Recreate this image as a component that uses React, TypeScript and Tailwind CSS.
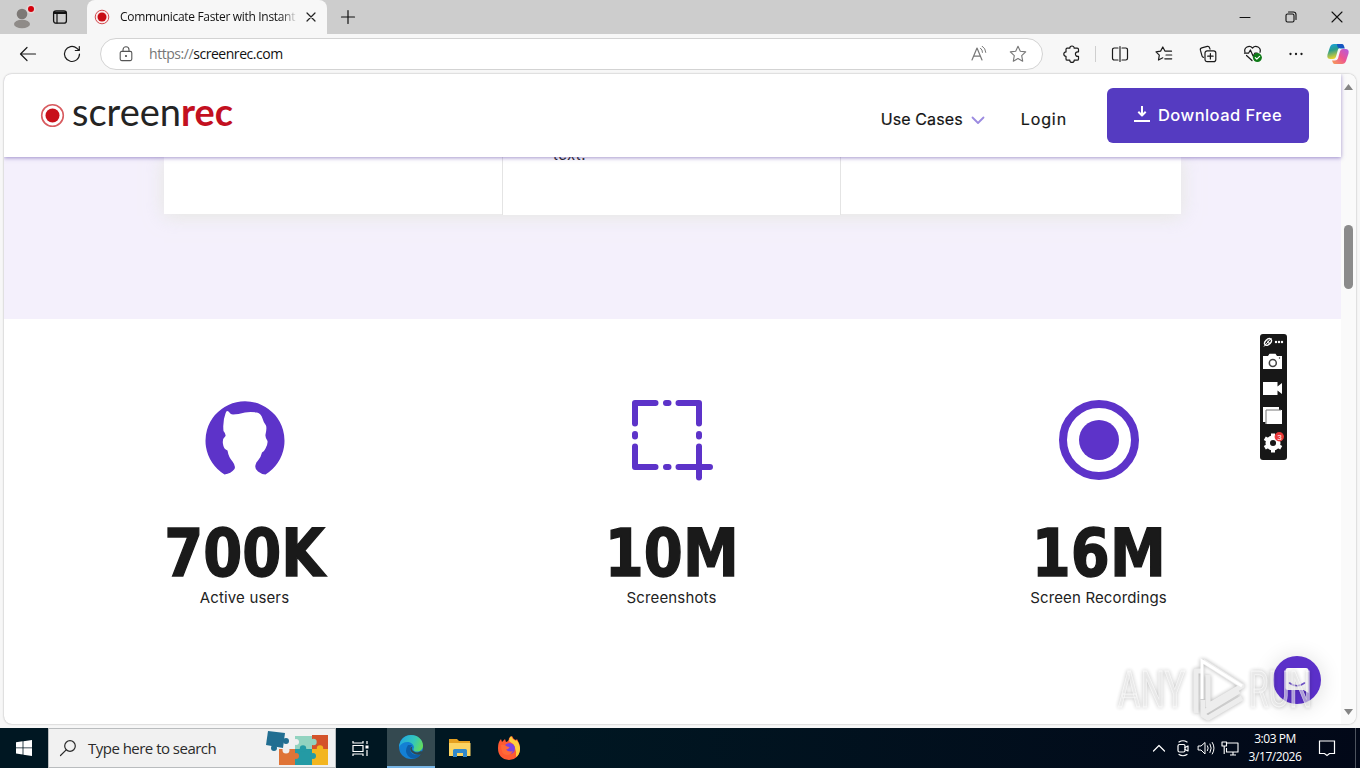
import type { ReactNode } from "react"

interface IconProps {
  readonly size?: number
  readonly className?: string
  readonly children: ReactNode
}

function Icon({ size = 20, className = "", children }: IconProps) {
  return (
    <svg
      width={size}
      height={size}
      viewBox={`0 0 ${size} ${size}`}
      fill="none"
      stroke="currentColor"
      strokeWidth="1.2"
      strokeLinecap="round"
      strokeLinejoin="round"
      className={`block shrink-0 ${className}`}
    >
      {children}
    </svg>
  )
}

const STAR = "M10 2.2l2.3 5 5.4.7-4 3.8 1 5.5-4.7-2.7-4.7 2.7 1-5.5-4-3.8 5.4-.7z"

function TitleBar() {
  return (
    <div className="flex h-[34px] bg-[#cdcdcd]">
      <div className="flex w-[87px] items-center">
        <svg width="26" height="28" viewBox="0 0 26 28" className="ml-[10px]">
          <circle cx="12" cy="11" r="5.3" fill="#7d7976" />
          <ellipse cx="12" cy="21" rx="8" ry="4.3" fill="#8f8b88" />
          <circle cx="21" cy="6" r="4.6" fill="#e3d6d6" />
          <circle cx="21" cy="6" r="3" fill="#d4000c" />
        </svg>
        <Icon size={16} className="ml-4 text-[#111]">
          <rect x="1.6" y="1.8" width="12.8" height="12.4" rx="2.5" strokeWidth="1.3" />
          <path d="M2.5 3.8h11" strokeWidth="2.6" />
          <path d="M5 5v9" strokeWidth="1.2" />
        </Icon>
      </div>
      <div className="flex h-[34px] w-[240px] items-center rounded-t-lg bg-[#f7f7f7]">
        <svg width="16" height="16" viewBox="0 0 16 16" className="ml-[7px]">
          <circle cx="8" cy="8" r="6.8" fill="#fbeaea" stroke="#d24a4e" strokeWidth="1" />
          <circle cx="8" cy="8" r="4.5" fill="#c80d14" />
        </svg>
        <div className="ml-[10px] w-[181px] whitespace-nowrap bg-linear-to-r from-[#111] from-88% to-[#f7f7f7] to-98% bg-clip-text font-['Open_Sans',sans-serif] text-[12px] tracking-[-0.32px] text-transparent">
          Communicate Faster with Instant V
        </div>
        <Icon size={12} className="ml-[4px] text-[#222]">
          <path d="M2 2l8 8M10 2l-8 8" />
        </Icon>
      </div>
      <div className="flex w-[42px] items-center justify-center">
        <Icon size={16} className="text-[#111]">
          <path d="M8 1.5v13M1.5 8h13" />
        </Icon>
      </div>
      <div className="flex-1" />
      <div className="flex items-center text-[#111]">
        <div className="flex w-[46px] justify-center">
          <Icon size={12}>
            <path d="M1 6.5h10" strokeWidth="1" />
          </Icon>
        </div>
        <div className="flex w-[46px] justify-center">
          <Icon size={12}>
            <rect x="1" y="3" width="8" height="8" rx="1.5" strokeWidth="1.1" />
            <path d="M3.5 1h5A2.5 2.5 0 0 1 11 3.5v5" strokeWidth="1.1" />
          </Icon>
        </div>
        <div className="flex w-[46px] justify-center">
          <Icon size={12}>
            <path d="M1 1l10 10M11 1L1 11" strokeWidth="1.1" />
          </Icon>
        </div>
      </div>
    </div>
  )
}

function AddressBar() {
  return (
    <div className="flex h-8 w-[943px] items-center rounded-full border border-[#d3d3d3] bg-white">
      <Icon size={16} className="ml-[17px] text-[#555]">
        <rect x="2.2" y="5.4" width="11.6" height="9.2" rx="1.5" strokeWidth="1.1" />
        <path d="M5 5V3.8a3 3 0 0 1 6 0V5" strokeWidth="1.1" />
        <circle cx="8" cy="10" r=".5" fill="currentColor" />
      </Icon>
      <div className="-mt-px ml-[15px] font-['Open_Sans',sans-serif] text-[14px] tracking-[-0.45px] text-[#111]">
        <span className="text-[#767676]">https://</span>screenrec.com
      </div>
      <div className="flex-1" />
      <Icon size={18} className="mr-[20px] text-[#777]">
        <path d="M2 15L7 3l5 12M3.7 11.2h6.6" />
        <path d="M10.5 3.2a5 5 0 0 1 2 4.2M12.2 1.2A7.6 7.6 0 0 1 15.8 7.4" strokeWidth="1" />
      </Icon>
      <Icon size={20} className="mr-[14px] text-[#777]">
        <path d={STAR} strokeWidth="1.1" />
      </Icon>
    </div>
  )
}

function Toolbar() {
  return (
    <div className="flex h-10 items-center bg-[#f7f7f7] text-[#1b1b1b]">
      <div className="flex w-14 justify-center">
        <Icon size={18}>
          <path d="M16.5 9H1.500M8 2.500L1.500 9 8 15.500" />
        </Icon>
      </div>
      <div className="flex w-8 justify-center">
        <Icon size={18}>
          <path d="M16.5 9A7.5 7.5 0 1 1 13.8 3.2L16 5.4M16.3 1.5v4h-4" />
        </Icon>
      </div>
      <div className="w-3" />
      <AddressBar />
      <div className="flex w-[52px] justify-center pl-[5px]">
        <Icon size={18}>
          <path d="M4 3.200h2.800a2.200 2.200 0 0 1 4.400 0h3a1.300 1.300 0 0 1 1.300 1.300v2.300h-.8a2.300 2.300 0 0 0 0 4.600h.8v2.500a1.300 1.300 0 0 1-1.300 1.300h-3a2.200 2.200 0 0 1-4.400 0H4.300A1.300 1.300 0 0 1 3 13.900v-2.600a2.200 2.200 0 0 1 0-4.400V4.500a1.300 1.300 0 0 1 1-1.300z" />
        </Icon>
      </div>
      <div className="h-4 w-px bg-[#cfcfcf]" />
      <div className="flex w-[47px] justify-center">
        <Icon size={18}>
          <path d="M9 1.5v15M7 3H3.2A1.7 1.7 0 0 0 1.5 4.7v8.6A1.7 1.7 0 0 0 3.2 15H7M11 3h3.8a1.7 1.7 0 0 1 1.7 1.7v8.6a1.7 1.7 0 0 1-1.7 1.7H11" />
        </Icon>
      </div>
      <div className="flex w-[42px] justify-center">
        <Icon size={18}>
          <path d="M7.8 12.8L3.5 15l.8-4.9L1 6.8l4.6-.7L7.8 2l2.1 4.1 6.6.1M11 10h5.7M9.8 13.8h6.9" />
        </Icon>
      </div>
      <div className="flex w-[46px] justify-center">
        <Icon size={18}>
          <path d="M4.5 12.3A2 2 0 0 1 3 10.8L1.4 5.2A2 2 0 0 1 2.8 2.8l5.4-1.4a2 2 0 0 1 2.4 1.4l.4 1.4" />
          <rect x="6" y="5.8" width="10.8" height="10.8" rx="2.2" />
          <path d="M11.4 8.5v5.4M8.7 11.2h5.4" />
        </Icon>
      </div>
      <div className="flex w-11 justify-center">
        <Icon size={20}>
          <path d="M2 8.3A4.4 4.4 0 0 1 9.5 4a4.4 4.4 0 0 1 7.5 4.3M3.5 11.5l5.5 5" />
          <path d="M1.5 9.2h4L7.4 6l2.8 6.2 1.6-3h2.5" />
          <circle cx="14.4" cy="13.6" r="4.5" fill="#0f7b18" stroke="none" />
          <path d="M12.3 13.7l1.5 1.5 2.8-2.8" stroke="#fff" />
        </Icon>
      </div>
      <div className="flex w-[42px] justify-center">
        <Icon size={18}>
          <path d="M3.500 9h.01M9 9h.01M14.500 9h.01" strokeWidth="2.3" />
        </Icon>
      </div>
      <svg width="24" height="24" viewBox="0 0 24 24" className="ml-[9px]">
        <defs>
          <linearGradient id="cop1" x1="0" y1="0" x2="0.3" y2="1">
            <stop offset="0" stopColor="#16a2e8" />
            <stop offset=".45" stopColor="#2a9d8c" />
            <stop offset="1" stopColor="#efd52b" />
          </linearGradient>
          <linearGradient id="cop2" x1="1" y1="0" x2="0" y2="1">
            <stop offset="0" stopColor="#b05ce4" />
            <stop offset=".5" stopColor="#ee5590" />
            <stop offset="1" stopColor="#f7a153" />
          </linearGradient>
        </defs>
        <path d="M15.5 2H8Q5 2 4 5L1.5 12.5Q.5 17 4.500 17H7q2.500 0 3.200-3L12 7.500Q12.700 5.500 15 5.500h3L17.300 3.800Q16.800 2 15.500 2z" fill="url(#cop1)" />
        <path d="M11 2h5q1.500 0 2 2l.8 2.500H14Q11 6 11 2z" fill="#1556c2" />
        <path d="M8.500 22H16q3 0 4-3l2.500-7.500Q23.500 7 19.500 7H17q-2.500 0-3.200 3L12 16.500Q11.300 18.500 9 18.500H6l.7 1.700Q7.200 22 8.500 22z" fill="url(#cop2)" />
      </svg>
    </div>
  )
}

function Logo() {
  return (
    <svg width="200" height="56" viewBox="0 0 200 56" className="block">
      <circle cx="12.500" cy="28.500" r="10.800" fill="#fff" stroke="#d85c60" strokeWidth="1.600" />
      <circle cx="12.500" cy="28.500" r="7" fill="#c8101a" />
      <text x="32" y="38.500" textLength="109" lengthAdjust="spacingAndGlyphs" fontFamily="Lato, sans-serif" fontSize="39" fill="#242424">
        screen
      </text>
      <text x="141" y="38.500" textLength="52" lengthAdjust="spacingAndGlyphs" fontFamily="Lato, sans-serif" fontWeight="700" fontSize="39" fill="#c3101f">
        rec
      </text>
    </svg>
  )
}

function SiteHeader() {
  return (
    <div className="relative z-10 flex h-[83px] items-start bg-white shadow-[0_1px_4px_rgba(85,60,160,0.55)]">
      <div className="ml-9 mt-[13px]">
        <Logo />
      </div>
      <div className="flex-1" />
      <div className="mt-[33px] flex items-center font-['Inter',sans-serif] text-[16px] text-[#151515] [-webkit-text-stroke:0.2px_#151515]">
        <span className="tracking-[0.100px]">Use Cases</span>
        <Icon size={14} className="ml-2 mt-[2px] text-[#9b8ae0]">
          <path d="M1.500 4.500L7 10l5.500-5.500" strokeWidth="1.800" />
        </Icon>
        <span className="ml-9 tracking-[0.9px]">Login</span>
      </div>
      <div className="ml-10 mr-8 mt-[14px] flex h-[55px] w-[202px] items-center rounded-md bg-[#553bc1] text-white">
        <Icon size={18} className="-mt-1 ml-[26px]">
          <path d="M9 1v9M5.300 6.800L9 10.500l3.700-3.700M1 16h16" strokeWidth="2" strokeLinecap="butt" />
        </Icon>
        <span className="ml-[7px] whitespace-nowrap font-['Inter',sans-serif] text-[16.500px] font-medium tracking-[0.450px]">
          Download Free
        </span>
      </div>
    </div>
  )
}

function Features() {
  return (
    <div className="h-[162px] overflow-hidden bg-[#f4f0fc] pl-40">
      <div className="flex h-[57px] w-[1017px] shadow-[0_2px_18px_rgba(220,225,205,0.6)]">
        <div className="h-[57px] w-[338px] bg-white" />
        <div className="h-[58px] w-[339px] border-x border-[#e4e4e4] bg-white">
          <div className="-mt-[14px] ml-[50px] font-['Inter',sans-serif] text-[15px] leading-6 tracking-[0.4px] text-[#222]">text.</div>
        </div>
        <div className="h-[57px] w-[340px] bg-white" />
      </div>
    </div>
  )
}

function UserIcon() {
  return (
    <svg width="82" height="82" viewBox="0 0 82 82">
      <path
        d="M20.500 75.500A39.500 39.500 0 1 1 61.500 75.500Q57 75 54 72.500Q50.500 70 51.500 66Q52 63 54 61.500Q57 58 58 53.500Q60.500 52 61.500 49.500Q64 45 63.500 42Q61 38 61.500 35.500Q63 29 62 26.500Q59 22 58.500 19.500Q57 14.500 53 13.500Q46 12.500 41 13.500Q34 15.500 29 15.500Q26 15 24.500 12.500Q22.500 11 21.500 14.500Q18.500 22 19.500 32Q22 35 21.500 37Q18 40 19 45Q19.500 50 23.500 51.500Q24.500 58 28.500 62.500Q32 67 30.500 70Q27 74.500 20.500 75.500z"
        fill="#5d33c9"
      />
    </svg>
  )
}

function CaptureIcon() {
  return (
    <svg width="82" height="82" viewBox="0 0 82 82" fill="none" stroke="#5d33c9" strokeWidth="6" strokeLinecap="round" strokeLinejoin="round">
      <path d="M4 24.500V4h20.500M35 4h2.500M47.500 4H68v20.500M4 35v2.500M68 35v2.500M4 47.500V68h20.500M35 68h2.500M47.500 68H79M68 47.500V78.500" />
    </svg>
  )
}

function RecordIcon() {
  return (
    <svg width="82" height="82" viewBox="0 0 82 82">
      <circle cx="41" cy="41" r="36" fill="none" stroke="#5d33c9" strokeWidth="8" />
      <circle cx="41" cy="41" r="20" fill="#5d33c9" />
    </svg>
  )
}

const STATS = [
  { value: "700K", label: "Active users", icon: <UserIcon /> },
  { value: "10M", label: "Screenshots", icon: <CaptureIcon /> },
  { value: "16M", label: "Screen Recordings", icon: <RecordIcon /> },
]

function Stats() {
  return (
    <div className="flex pl-[27px] pt-[80px]">
      {STATS.map((stat) => (
        <div key={stat.label} className="flex w-[427px] flex-col items-center">
          {stat.icon}
          <div className="mt-[43px] h-[60px] scale-x-[0.85] font-['DejaVu_Sans',sans-serif] text-[66px] font-bold leading-[60px] text-[#1a1a1a] [-webkit-text-stroke:1.500px_#1a1a1a]">
            {stat.value}
          </div>
          <div className="mt-[2px] font-['Inter',sans-serif] text-[15px] leading-6 tracking-[0.150px] text-[#222]">
            {stat.label}
          </div>
        </div>
      ))}
    </div>
  )
}

function RecorderPanel() {
  return (
    <div className="absolute left-[1256px] top-[260px] flex h-[126px] w-[27px] flex-col items-center rounded-[3px] bg-[#171717] text-white">
      <svg width="27" height="126" viewBox="0 0 27 126">
        <ellipse cx="8" cy="8" rx="4" ry="2.600" transform="rotate(-45 8 8)" fill="none" stroke="#fff" strokeWidth="1.400" />
        <path d="M4 12.500L11.500 4M8 6.500v2.500h2.500" fill="none" stroke="#fff" />
        <g fill="#fff">
          <circle cx="16" cy="8" r="1.200" />
          <circle cx="19" cy="8" r="1.200" />
          <circle cx="22" cy="8" r="1.200" />
          <path d="M3 22h5l1.500-2.200h6L17 22h5v13H3z" />
          <path d="M3 48h14.500v4.500L22 49v11l-4.500-3.500V61H3z" />
          <path d="M3 73h16v15H3z" />
          <path d="M5.500 76H22v14H5.500z" />
        </g>
        <path d="M6 90V76h15" fill="none" stroke="#777" />
        <circle cx="12.800" cy="29" r="3.500" fill="none" stroke="#444" strokeWidth="1.500" />
        <circle cx="19.500" cy="24" r=".7" fill="#333" />
        <circle cx="13" cy="109" r="5.300" fill="none" stroke="#fff" strokeWidth="4.500" />
        <path d="M13 99.500v3M13 115.500v3M4.800 104.200l2.600 1.500M18.600 112.300l2.600 1.500M4.800 113.800l2.600-1.500M18.600 105.700l2.600-1.500" stroke="#fff" strokeWidth="4" />
        <circle cx="19.300" cy="102.700" r="4.700" fill="#e83838" />
        <text x="17.200" y="105.800" fontSize="8" fontFamily="Liberation Sans, sans-serif" fill="#fff">
          3
        </text>
      </svg>
    </div>
  )
}

function ChatButton() {
  return (
    <div className="absolute left-[1269px] top-[582px] flex size-12 items-center justify-center rounded-full bg-[#5b30c9] shadow-[0_2px_22px_rgba(0,0,0,0.14)]">
      <svg width="24" height="28" viewBox="0 0 24 28">
        <path d="M3 2h18q2.500 0 2.500 2.500V27l-5-3H3Q.5 24 .5 21.500v-17Q.5 2 3 2z" fill="#fff" />
        <path d="M4.500 17q7.500 5.500 15 0" fill="none" stroke="#7657d0" strokeWidth="1.600" strokeLinecap="round" />
      </svg>
    </div>
  )
}

function Watermark() {
  return (
    <svg width="200" height="76" viewBox="0 0 200 76" className="absolute left-[1112px] top-[579px] opacity-90 drop-shadow-[0_0_2px_rgba(0,0,0,0.35)]">
      <g fontFamily="Roboto, sans-serif" fontSize="50" fill="#f0f0f0" fillOpacity=".65" stroke="#fff" strokeOpacity=".7" strokeWidth=".8">
        <text x="2" y="54" textLength="67" lengthAdjust="spacingAndGlyphs">ANY</text>
        <text x="133" y="54" textLength="63" lengthAdjust="spacingAndGlyphs">RUN</text>
      </g>
      <g fill="none" stroke="#ececec" strokeWidth="5" strokeLinejoin="round">
        <path d="M87 8l39 25-34 20V22" />
        <path d="M80 60V18h6M87 47v15l5 3 34-20M87 60l36-22" />
      </g>
      <path d="M86 46V8l40 25" fill="none" stroke="#fff" strokeWidth="3" />
    </svg>
  )
}

function Scrollbar() {
  return (
    <div className="flex w-[15px] flex-col items-center bg-[#fafafa]">
      <svg width="9" height="6" viewBox="0 0 9 6" className="mt-[10px]">
        <path d="M4.500 0L9 6H0z" fill="#858585" />
      </svg>
      <div className="mt-[135px] h-16 w-[9px] rounded-full bg-[#8b8b8b]" />
      <div className="flex-1" />
      <svg width="9" height="6" viewBox="0 0 9 6" className="mb-[9px]">
        <path d="M0 0h9L4.500 6z" fill="#858585" />
      </svg>
    </div>
  )
}

function SearchArt() {
  return (
    <svg width="64" height="38" viewBox="0 0 64 38">
      <g>
        <path d="M13 20h16v16H13z" fill="#df7437" />
        <path d="M29 7h17v14H29z" fill="#92d3c0" />
        <path d="M46 6h16v15H46z" fill="#d4532b" />
        <path d="M29 20h17v16H29z" fill="#249aa4" />
        <path d="M46 20h16v16H46z" fill="#f3b51f" />
        <circle cx="47.500" cy="13" r="3.200" fill="#92d3c0" />
        <circle cx="37" cy="19.500" r="3.200" fill="#249aa4" />
        <circle cx="54" cy="19.500" r="3.200" fill="#f3b51f" />
        <circle cx="47" cy="27" r="3" fill="#249aa4" />
        <circle cx="30" cy="13" r="3" fill="#f0f0f0" />
        <circle cx="20" cy="21" r="3.500" fill="#f0f0f0" />
        <circle cx="30" cy="27" r="3" fill="#df7437" />
      </g>
      <g fill="#226e91">
        <path d="M2 2l17 2-2 15-17-3z" />
        <circle cx="20" cy="12" r="3" />
        <circle cx="8" cy="19" r="3" />
      </g>
    </svg>
  )
}

function EdgeIcon() {
  return (
    <svg width="26" height="26" viewBox="0 0 26 26">
      <defs>
        <linearGradient id="edgeTop" x1="0" y1=".3" x2="1" y2=".6">
          <stop offset="0" stopColor="#20a8e2" />
          <stop offset=".6" stopColor="#35c7b8" />
          <stop offset="1" stopColor="#65dc59" />
        </linearGradient>
      </defs>
      <circle cx="13" cy="13" r="12" fill="#1380d4" />
      <path d="M1 13C2 5 7 1 13 1c7 0 12 5 12 10.500 0 4-3 6-6 6-4 0-4-2-3-4 0-3-3-5.500-6.500-5.500Q4 8 1 13z" fill="url(#edgeTop)" />
      <path d="M10 11q-4 6 0 11 3 3 7 2.500 4-1 6-4.500Q14 23 12 16q-.5-3 2-5z" fill="#0c5ea9" />
      <path d="M14.500 12.500q-2 3 1.500 5t7-.5L25 18l-2 2.500q-8 1-10.500-4Q11.500 13 14.500 12.500z" fill="#324850" />
    </svg>
  )
}

function Taskbar() {
  return (
    <div className="flex h-10 bg-linear-to-r from-[#001722] from-40% to-[#020818] text-white">
      <div className="flex w-12 items-center justify-center">
        <svg width="16" height="16" viewBox="0 0 16 16" fill="#fff">
          <path d="M0 2.200l6.600-.9v6.200H0zM7.400 1.200L16 0v7.500H7.400zM0 8.300h6.600v6.200L0 13.600zM7.400 8.300H16V16l-8.600-1.200z" />
        </svg>
      </div>
      <div className="flex w-72 items-center border border-[#b9bcbe] bg-[#f1f1f1] text-[#2b2b2b]">
        <Icon size={18} className="ml-[10px]">
          <circle cx="11" cy="7" r="5.300" />
          <path d="M7.200 10.800L1.500 16.500" />
        </Icon>
        <span className="ml-[11px] w-[178px] whitespace-nowrap font-['Open_Sans',sans-serif] text-[15px] tracking-[-0.520px]">
          Type here to search
        </span>
        <SearchArt />
      </div>
      <div className="flex w-[51px] items-center pl-[16px]">
        <Icon size={17}>
          <path d="M1 1v2h10V1M1 16v-2h10v2M1 5.500h10v6H1zM15 1v3M15 10v6" strokeLinecap="butt" strokeLinejoin="miter" />
          <path d="M13.500 5.500h3v3h-3z" fill="#fff" stroke="none" />
        </Icon>
      </div>
      <div className="flex w-12 items-center justify-center border-b-2 border-[#77b5e5] bg-[#344950]">
        <EdgeIcon />
      </div>
      <div className="flex w-12 items-center justify-center pl-[2px]">
        <svg width="22" height="20" viewBox="0 0 22 20">
          <path d="M0 1h8l2 2h11v4H0z" fill="#e5a020" />
          <path d="M0 5h21.500v13H0z" fill="#fcd462" />
          <path d="M4 19v-6.500Q4 11 5.500 11h11Q18 11 18 12.500V19h-4v-4H8v4z" fill="#3289cb" />
        </svg>
      </div>
      <div className="flex w-[52px] items-center justify-center">
        <svg width="24" height="24" viewBox="0 0 24 24">
          <path d="M1 12Q1 6 4 3l1 3 3-3 1 3Q12 5 12 2q1-1 3-2 1 3 4 4l1-1q3 5 3 9 0 11-11 12Q1 23 1 12z" fill="#ff5a32" />
          <path d="M14 0q1 3 5 5l.5-1Q23 8 23 13q0 5-4 8 1-12-7-16 0-3 2-5z" fill="#ffcf3d" />
          <circle cx="12.500" cy="12.500" r="5.500" fill="#7a42e0" />
          <path d="M4 9q4-1 6 1.500l2.500.5q-1 2.500-3.500 2.500 2.500 3 7 1.500-2 4-6 4-6 0-6-10z" fill="#ff6a38" />
        </svg>
      </div>
      <div className="flex-1" />
      <div className="flex items-center">
        <Icon size={14} className="mr-2">
          <path d="M1.500 10L7 4.500l5.500 5.500" />
        </Icon>
        <Icon size={18} className="mr-[5px]">
          <rect x="4" y="5.500" width="7" height="7.500" rx="1.500" />
          <path d="M11 8.500l3-1.500v5l-3-1.500M5 3q4-2.500 8 0M5 15.500q4 2.500 8 0" />
        </Icon>
        <Icon size={18} className="mr-[6px]">
          <path d="M1.500 7H4l4-3.500v11.500l-4-4H1.500zM10.500 6.800q1.500 2.200 0 4.800M13 5q2.500 4 0 8.500M15.300 3.500q3.500 5.500 0 11.500" strokeWidth="1" />
        </Icon>
        <Icon size={18}>
          <path d="M6 4h11v9H5.500V9M9 16h6M12 13v3M1 3h4.500v4H1zM3.200 7v8" strokeLinecap="butt" strokeWidth="1.100" />
        </Icon>
      </div>
      <div className="ml-[9px] flex w-[54px] flex-col items-center whitespace-nowrap pt-[2px] font-['Open_Sans',sans-serif] text-[12px] leading-[18px] tracking-[-0.45px]">
        <span>3:03 PM</span>
        <span>3/17/2026</span>
      </div>
      <div className="flex w-[54px] items-center justify-center border-r border-[#4d535e] pr-1">
        <Icon size={18}>
          <path d="M1.500 2h15v12.500h-5L9 16.500l-2.500-2h-5z" strokeLinejoin="miter" />
        </Icon>
      </div>
      <div className="w-1" />
    </div>
  )
}

export default function App() {
  return (
    <div className="flex h-[768px] w-[1360px] flex-col overflow-hidden bg-[#f7f7f7]">
      <TitleBar />
      <Toolbar />
      <div className="relative mx-1 mb-1 flex h-[650px] overflow-hidden rounded-lg bg-white shadow-[0_0_2px_rgba(0,0,0,0.35)]">
        <div className="w-[1337px]">
          <SiteHeader />
          <Features />
          <Stats />
        </div>
        <Scrollbar />
        <RecorderPanel />
        <ChatButton />
        <Watermark />
      </div>
      <Taskbar />
    </div>
  )
}
